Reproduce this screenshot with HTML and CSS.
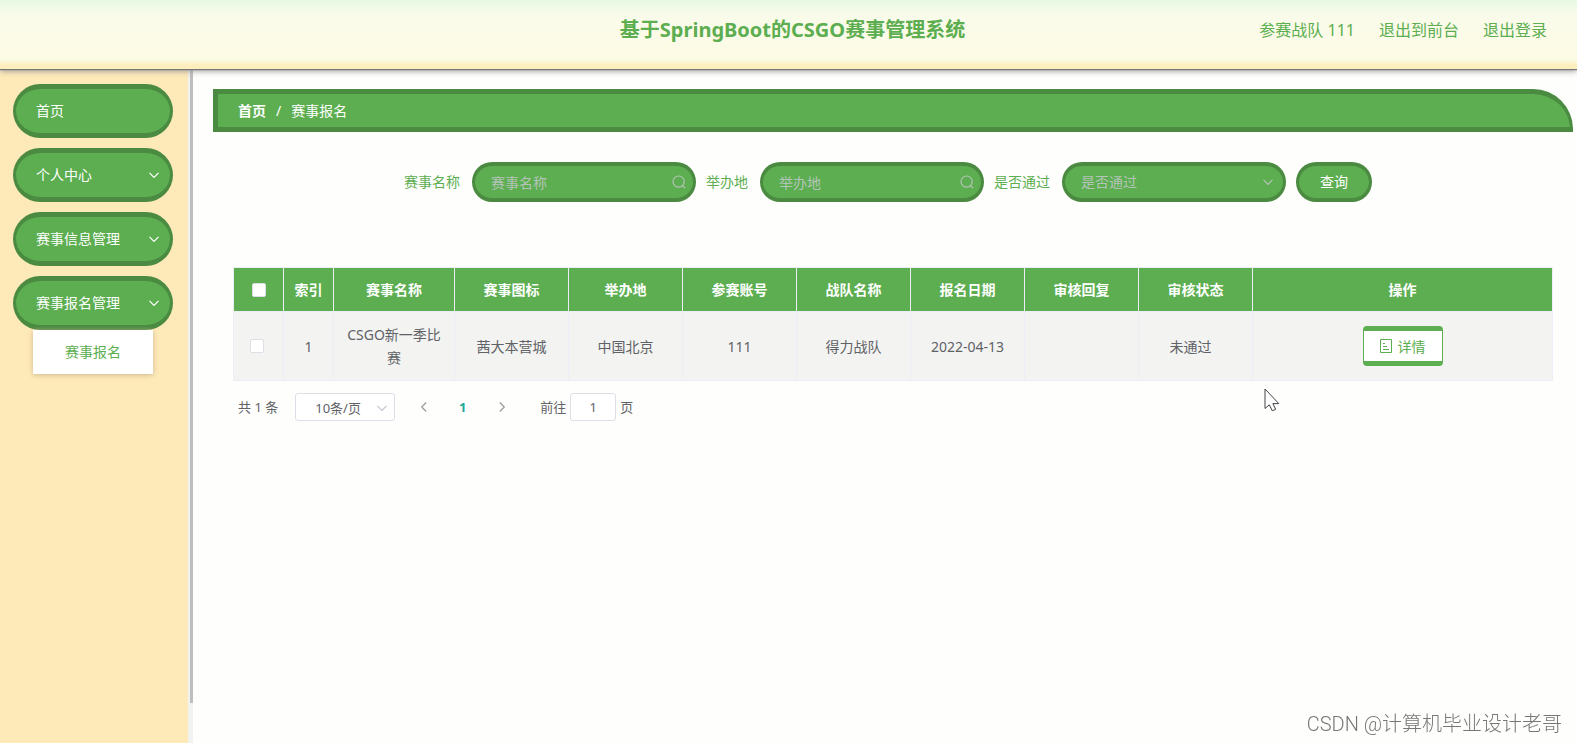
FILE: index.html
```html
<!DOCTYPE html>
<html lang="zh-CN">
<head>
<meta charset="utf-8">
<title>基于SpringBoot的CSGO赛事管理系统</title>
<link rel="stylesheet" href="styles.css">
</head>
<body>
<svg class="sprite" aria-hidden="true">
  <symbol id="down" viewBox="0 0 12 12"><path d="M1.5 3.8 6 8.3l4.5-4.5"/></symbol>
  <symbol id="left" viewBox="0 0 12 12"><path d="M8.2 1.5 3.7 6l4.5 4.5"/></symbol>
  <symbol id="right" viewBox="0 0 12 12"><path d="M3.8 1.5 8.3 6l-4.5 4.5"/></symbol>
  <symbol id="search" viewBox="0 0 14 14"><circle cx="6.6" cy="6.6" r="5.6"/><path d="m10.6 10.6 2.6 2.6"/></symbol>
  <symbol id="doc" viewBox="0 0 12 14"><path d="M.5.5h11v13H.5zM3 4.5h2M3 7.5h4M3 10.5h6"/></symbol>
</svg>
<header class="header">
  <h1 class="title">基于SpringBoot的CSGO赛事管理系统</h1>
  <nav class="user-nav">
    <span>参赛战队 111</span>
    <a href="#">退出到前台</a>
    <a href="#">退出登录</a>
  </nav>
</header>
<div class="layout">
  <aside class="sidebar">
    <nav class="menu">
      <button class="menu-item" type="button">首页</button>
      <button class="menu-item" type="button">个人中心<svg class="icon"><use href="#down"/></svg></button>
      <button class="menu-item" type="button">赛事信息管理<svg class="icon"><use href="#down"/></svg></button>
      <div class="menu-group">
        <button class="menu-item" type="button">赛事报名管理<svg class="icon"><use href="#down"/></svg></button>
        <a class="submenu" href="#">赛事报名</a>
      </div>
    </nav>
    <div class="scrollbar"><div class="thumb"></div></div>
  </aside>
  <main class="main">
    <nav class="breadcrumb"><a href="#">首页</a><span class="slash">/</span><span>赛事报名</span></nav>
    <section class="content">
      <form class="search">
        <label for="name">赛事名称</label>
        <div class="field"><input id="name" type="text" placeholder="赛事名称"><svg class="icon search-icon"><use href="#search"/></svg></div>
        <label for="place">举办地</label>
        <div class="field"><input id="place" type="text" placeholder="举办地"><svg class="icon search-icon"><use href="#search"/></svg></div>
        <label for="passed">是否通过</label>
        <div class="field"><select id="passed"><option>是否通过</option><option>是</option><option>否</option></select><svg class="icon"><use href="#down"/></svg></div>
        <button class="query" type="button">查询</button>
      </form>
      <table class="table">
        <colgroup><col class="narrow"><col class="narrow"><col class="name"><col><col><col><col><col><col><col><col class="action"></colgroup>
        <thead>
          <tr><th><input class="check" type="checkbox" aria-label="全选"></th><th>索引</th><th>赛事名称</th><th>赛事图标</th><th>举办地</th><th>参赛账号</th><th>战队名称</th><th>报名日期</th><th>审核回复</th><th>审核状态</th><th>操作</th></tr>
        </thead>
        <tbody>
          <tr><td class="select-cell"><input class="check" type="checkbox" aria-label="选择第1行"></td><td>1</td><td>CSGO新一季比赛</td><td>茜大本营城</td><td>中国北京</td><td>111</td><td>得力战队</td><td>2022-04-13</td><td></td><td><span class="status">未通过</span></td><td><button class="detail" type="button"><svg class="icon doc"><use href="#doc"/></svg>详情</button></td></tr>
        </tbody>
      </table>
      <div class="pagination">
        <span>共 1 条</span>
        <div class="page-size"><select aria-label="每页条数"><option>10条/页</option></select><svg class="icon"><use href="#down"/></svg></div>
        <div class="pager">
          <button type="button" aria-label="上一页"><svg class="icon"><use href="#left"/></svg></button>
          <button class="current" type="button">1</button>
          <button type="button" aria-label="下一页"><svg class="icon"><use href="#right"/></svg></button>
        </div>
        <label class="jump">前往<input type="text" value="1">页</label>
      </div>
    </section>
  </main>
</div>
<svg class="cursor" viewBox="0 0 16 24" aria-hidden="true"><path d="M1 1v19.5l4.3-3.7 3 6 3.4-1.5-2.8-5.7h5.9z"/></svg>
<div class="watermark">CSDN @计算机毕业设计老哥</div>
</body>
</html>
```
FILE: styles.css
```css
* { box-sizing: border-box; }
:root { --green: #5cae50; --dark: #4a8a41; }
body {
  margin: 0;
  min-height: 100vh;
  display: flex;
  flex-direction: column;
  background: #fefefd;
  color: #606266;
  font: 14px/22px "Noto Sans", "Noto Sans CJK SC", sans-serif;
}
button, input, select { font: inherit; color: inherit; margin: 0; }
button { cursor: pointer; }
a { color: inherit; text-decoration: none; }
.sprite { display: none; }
.icon { width: 12px; height: 12px; flex: none; fill: none; stroke: currentColor; stroke-width: 1.2; }

.header {
  position: relative;
  z-index: 1;
  display: grid;
  grid-template-columns: 1fr auto 1fr;
  align-items: center;
  height: 69px;
  padding: 0 30px 10px 38px;
  color: var(--green);
  background: linear-gradient(#e8f9e3 0, #f9fbea 14px, #fdfbe6 52px, #fbfae2 60px, #fdefbd 65px, #fdefbd 100%);
  box-shadow: 0 1px 1px #777, 0 2px 6px #999;
}
.title { grid-column: 2; margin: 0; font-size: 20px; line-height: 30px; font-weight: 700; }
.user-nav { display: flex; justify-content: flex-end; gap: 24px; font-size: 16px; }

.layout { flex: 1; display: flex; }
.sidebar { width: 193px; flex: none; display: flex; background: #fee9b8; }
.menu { flex: 1; display: flex; flex-direction: column; gap: 10px; padding: 15px 15px 0 13px; }
.menu-item {
  display: flex;
  justify-content: space-between;
  align-items: center;
  width: 100%;
  height: 54px;
  padding: 0 10px 0 20px;
  border: solid var(--dark);
  border-width: 5px 3px;
  border-radius: 30px;
  background: var(--green);
  color: #fff;
}
.submenu {
  display: block;
  margin: 0 20px;
  line-height: 44px;
  text-align: center;
  color: var(--green);
  background: #fff;
  box-shadow: 0 1px 5px #ccb98f;
}
.scrollbar { width: 5px; background: #f2f2f0; padding-left: 2px; }
.thumb { height: 94%; background: #bebebe; }

.main { flex: 1; min-width: 0; padding: 20px 4px 0 20px; }
.breadcrumb {
  display: flex;
  align-items: center;
  height: 43px;
  padding-left: 20px;
  border: solid var(--dark);
  border-width: 5px 3px 5px 5px;
  border-top-right-radius: 40px;
  background: var(--green);
  color: #fff;
}
.breadcrumb a { font-weight: 700; }
.slash { margin: 0 10px; }

.content { padding: 30px 20px 0; }
.search { display: flex; justify-content: center; align-items: center; gap: 10px; padding-right: 10px; color: var(--green); }
.search label { margin-right: 2px; }
.field { position: relative; width: 224px; color: #b4c4b8; }
.field input, .field select, .query {
  width: 100%;
  height: 40px;
  border: solid var(--dark);
  border-width: 4px 3px;
  border-radius: 20px;
  background: var(--green);
  appearance: none;
}
.field input, .field select { display: block; padding: 0 30px 0 16px; outline: 0; }
.field input::placeholder { color: inherit; opacity: 1; }
.field .icon { position: absolute; right: 12px; top: 14px; pointer-events: none; }
.field .search-icon { width: 14px; height: 14px; right: 10px; top: 13px; }
.search .query { width: 76px; color: #fff; }

.table { width: 100%; margin-top: 65px; border-collapse: collapse; table-layout: fixed; text-align: center; background: #f3f3f2; }
.narrow { width: 50px; }
.name { width: 121px; }
.action { width: 300px; }
.table th, .table td { padding: 0 10px; border: 1px solid #ebeef5; }
.table th { height: 44px; background: var(--green); color: #fff; font-weight: 700; padding: 0; }
.table td { height: 69px; line-height: 23px; }
.table .select-cell { padding-right: 14px; }
.status { margin-right: 10px; }
.check { appearance: none; display: block; width: 14px; height: 14px; margin: 0 auto; border: 1px solid #dcdfe6; border-radius: 2px; background: #fff; }
.detail {
  display: inline-flex;
  align-items: center;
  justify-content: center;
  gap: 6px;
  width: 80px;
  height: 40px;
  padding: 0;
  border: solid var(--green);
  border-width: 5px 1px;
  border-radius: 4px;
  background: #fff;
  color: var(--green);
}
.doc { height: 14px; stroke-width: 1; }

.pagination { display: flex; align-items: center; padding: 12px 5px 0; font-size: 13px; line-height: 28px; }
.page-size { position: relative; margin-left: 17px; }
.page-size select {
  display: block;
  appearance: none;
  width: 100px;
  height: 28px;
  padding: 0 0 0 19px;
  border: 1px solid #dcdfe6;
  border-radius: 3px;
  background: #fff;
}
.page-size .icon { position: absolute; right: 7px; top: 9px; color: #c0c4cc; }
.pager { display: flex; gap: 4px; margin: 0 21px 0 11px; }
.pager button { display: grid; place-items: center; width: 35px; height: 28px; padding: 0; border: 0; background: none; color: #999; }
.pager .current { color: #1fa99a; font-weight: 700; }
.jump { display: flex; align-items: center; gap: 4px; }
.jump input { width: 46px; height: 28px; padding: 0; border: 1px solid #dcdfe6; border-radius: 3px; background: #fff; text-align: center; }

.cursor { position: absolute; left: 1264px; top: 388px; width: 16px; height: 24px; fill: #fff; stroke: #444; }
.watermark {
  position: fixed;
  right: 15px;
  bottom: 5px;
  font: 300 20px/28px Roboto, "Noto Sans CJK SC", sans-serif;
  color: #777;
}
```
